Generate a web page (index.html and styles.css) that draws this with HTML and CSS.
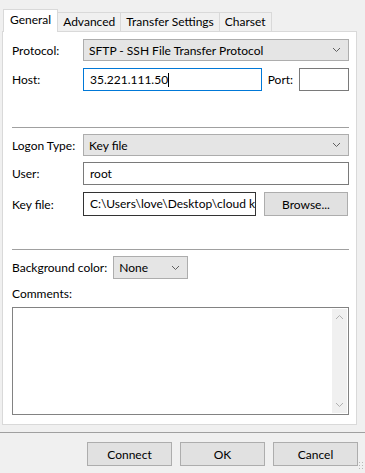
FILE: index.html
```html
<!DOCTYPE html>
<html lang="en">
<head>
    <meta charset="UTF-8">
    <meta name="viewport" content="width=device-width, initial-scale=1.0">
    <title>Site Settings</title>
    <link rel="stylesheet" href="styles.css">
</head>
<body>
    <div class="tabs">
        <div class="tab active">General</div>
        <div class="tab">Advanced</div>
        <div class="tab">Transfer Settings</div>
        <div class="tab">Charset</div>
    </div>

    <div class="panel">
        <div class="row">
            <label class="label">Protocol:</label>
            <div class="combo wide">
                <span>SFTP - SSH File Transfer Protocol</span>
                <svg class="chev" width="9" height="6" viewBox="0 0 9 6"><path d="M1 1l3.5 3.5L8 1" fill="none" stroke="#606060" stroke-width="1"/></svg>
            </div>
        </div>
        <div class="row">
            <label class="label">Host:</label>
            <div class="field host focused">35.221.111.50<span class="caret"></span></div>
            <label class="port-label">Port:</label>
            <div class="field port"></div>
        </div>

        <hr class="sep first-sep">

        <div class="row tight">
            <label class="label">Logon Type:</label>
            <div class="combo wide">
                <span>Key file</span>
                <svg class="chev" width="9" height="6" viewBox="0 0 9 6"><path d="M1 1l3.5 3.5L8 1" fill="none" stroke="#606060" stroke-width="1"/></svg>
            </div>
        </div>
        <div class="row">
            <label class="label">User:</label>
            <div class="field grow">root</div>
        </div>
        <div class="row tight">
            <label class="label">Key file:</label>
            <div class="field keyfile">C:\Users\love\Desktop\cloud k</div>
            <button class="btn browse">Browse...</button>
        </div>

        <hr class="sep second-sep">

        <div class="row">
            <label class="label bg-label">Background color:</label>
            <div class="combo small">
                <span>None</span>
                <svg class="chev" width="9" height="6" viewBox="0 0 9 6"><path d="M1 1l3.5 3.5L8 1" fill="none" stroke="#606060" stroke-width="1"/></svg>
            </div>
        </div>
        <div class="comments-label">Comments:</div>
        <div class="comments">
            <div class="comments-text"></div>
            <div class="scrollbar">
                <svg width="9" height="6" viewBox="0 0 9 6"><path d="M1 5l3.5-3.5L8 5" fill="none" stroke="#b0b0b0" stroke-width="1"/></svg>
                <svg width="9" height="6" viewBox="0 0 9 6"><path d="M1 1l3.5 3.5L8 1" fill="none" stroke="#b0b0b0" stroke-width="1"/></svg>
            </div>
        </div>
    </div>

    <div class="footer">
        <button class="btn">Connect</button>
        <button class="btn">OK</button>
        <button class="btn">Cancel</button>
    </div>
    <div class="grip"></div>
</body>
</html>
```

FILE: styles.css
```css
body {
    margin: 0;
    width: 365px;
    height: 473px;
    background: #f0f0f0;
    font-family: Lato, "Noto Sans", sans-serif;
    font-size: 12px;
    color: #000;
    overflow: hidden;
    position: relative;
}
.tabs {
    display: flex;
    align-items: flex-end;
    padding: 9px 0 0 3px;
    height: 22px;
}
.tab {
    height: 18px;
    line-height: 18px;
    padding: 0 5px;
    border: 1px solid #d9d9d9;
    border-bottom: none;
    border-left: none;
    background: #f0f0f0;
}
.tab.active {
    height: 22px;
    line-height: 20px;
    padding: 0 6px 0 6px;
    background: #fff;
    border-left: 1px solid #d9d9d9;
    position: relative;
    z-index: 1;
    margin-bottom: -1px;
}
.panel {
    background: #fff;
    border: 1px solid #d9d9d9;
    margin: 0 8px 0 2px;
    padding: 7px 7px 7px 9px;
    height: 378px;
}
.row {
    display: flex;
    align-items: center;
    margin-bottom: 7px;
}
.row.tight {
    margin-bottom: 6px;
}
.label {
    width: 71px;
    flex: none;
}
.bg-label {
    width: auto;
    margin-right: 6px;
}
.combo {
    display: flex;
    align-items: center;
    justify-content: space-between;
    box-sizing: border-box;
    height: 22px;
    padding: 0 7px 0 5px;
    background: #e5e5e5;
    border: 1px solid #adadad;
}
.combo.wide {
    flex: 1;
}
.combo.small {
    width: 75px;
    height: 23px;
}
.field {
    box-sizing: border-box;
    height: 23px;
    line-height: 21px;
    padding: 0 6px;
    border: 1px solid #7a7a7a;
    background: #fff;
    white-space: nowrap;
    overflow: hidden;
}
.field.grow {
    flex: 1;
}
.field.focused {
    border-color: #0078d7;
}
.host {
    width: 179px;
}
.caret {
    display: inline-block;
    width: 1px;
    height: 14px;
    background: #000;
    vertical-align: -3px;
}
.port-label {
    margin: 0 6px;
}
.port {
    width: 50px;
}
.keyfile {
    width: 173px;
    height: 24px;
    line-height: 22px;
    border-color: #333;
    padding-right: 0;
}
.btn {
    font-family: inherit;
    font-size: 12px;
    color: #000;
    background: #e1e1e1;
    border: 1px solid #adadad;
    height: 24px;
    width: 85px;
    padding: 0;
}
.browse {
    margin-left: 8px;
    width: 84px;
}
.sep {
    border: none;
    border-top: 1px solid #a0a0a0;
    margin: 0 0 6px;
    height: 0;
}
.first-sep {
    margin-top: 36px;
}
.second-sep {
    margin-top: 33px;
}
.comments-label {
    line-height: 16px;
    margin-bottom: 5px;
}
.comments {
    display: flex;
    height: 108px;
    box-sizing: border-box;
    border: 1px solid #828282;
    padding: 1px;
}
.comments-text {
    flex: 1;
}
.scrollbar {
    width: 15px;
    background: #f0f0f0;
    display: flex;
    flex-direction: column;
    justify-content: space-between;
    align-items: center;
    padding: 5px 0;
}
.footer {
    margin-top: 7px;
    border-top: 1px solid #a0a0a0;
    display: flex;
    justify-content: flex-end;
    gap: 8px;
    padding: 9px 7px 0 0;
}
.grip {
    position: absolute;
    right: 1px;
    bottom: 2px;
    width: 6px;
    height: 10px;
    background-image: radial-gradient(circle, #b8b8b8 1px, transparent 1px);
    background-size: 3px 3px;
}
```
